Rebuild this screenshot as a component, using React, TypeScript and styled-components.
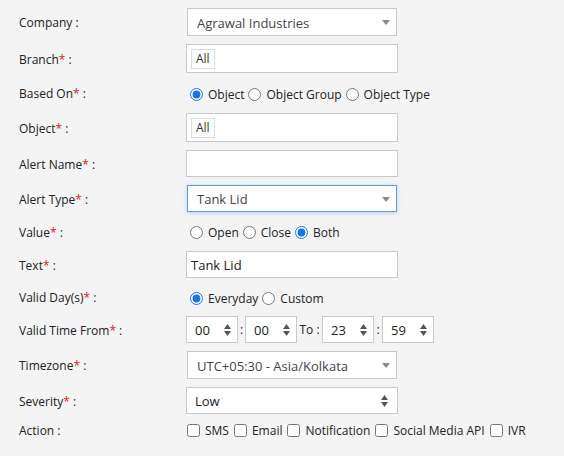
import React from 'react';
import styled, { createGlobalStyle, css } from 'styled-components';

const GlobalStyle = createGlobalStyle`
  html, body {
    margin: 0;
    padding: 0;
    background: #f4f4f4;
  }
  body {
    font-family: "Open Sans", "Noto Sans", "Liberation Sans", sans-serif;
    font-size: 12px;
    color: #222;
  }
`;

const Form = styled.div`
  display: flex;
  flex-direction: column;
  gap: 8px;
  padding: 8px 0 0 19px;
  width: 545px;
`;

const Row = styled.div<{ $h: number }>`
  display: flex;
  align-items: center;
  height: ${(p) => p.$h}px;
`;

const Label = styled.div`
  width: 167px;
  flex-shrink: 0;
  color: #222;
  line-height: 16px;
  padding-top: 2px;
`;

const Req = styled.span`
  color: #e8141c;
`;

const boxBase = css`
  box-sizing: border-box;
  background: #fff;
  border: 1px solid #c9c9c9;
  display: flex;
  align-items: center;
`;

const SelectBox = styled.div<{ $focus?: boolean }>`
  ${boxBase}
  width: 210px;
  height: 28px;
  margin-left: 1px;
  padding: 1px 6px 0 9px;
  justify-content: space-between;
  font-size: 13px;
  color: #444;
  ${(p) =>
    p.$focus &&
    css`
      height: 27px;
      border-color: #5b9cf2;
      box-shadow: 0 1px 4px rgba(80, 130, 200, 0.35);
    `}
`;

const NativeSelect = styled.div`
  ${boxBase}
  width: 212px;
  height: 27px;
  padding: 0 9px 0 8px;
  justify-content: space-between;
  font-size: 13px;
  color: #222;
`;

const TextBox = styled.div`
  ${boxBase}
  width: 212px;
  height: 27px;
  padding: 0 4px;
  font-size: 13px;
  color: #222;
`;

const TagBox = styled.div`
  ${boxBase}
  width: 212px;
  height: 29px;
  padding: 0 4px;
`;

const Tag = styled.span`
  box-sizing: border-box;
  height: 20px;
  padding: 0 4px;
  border: 1px solid #dcdcdc;
  display: inline-flex;
  align-items: center;
  font-size: 12px;
  color: #333;
`;

const OptionGroup = styled.div`
  display: flex;
  align-items: center;
  padding: 2px 0 0 4px;
  gap: 4px;
`;

const Option = styled.label`
  display: inline-flex;
  align-items: center;
  gap: 5px;
  color: #222;
  white-space: nowrap;

  input {
    margin: 0;
    width: 13px;
    height: 13px;
    accent-color: #1a73e8;
  }
`;

const CheckGroup = styled(OptionGroup)`
  padding: 0 0 0 1px;
  gap: 5px;
`;

const TimeRow = styled.div`
  display: flex;
  align-items: center;
`;

const Spin = styled.div`
  ${boxBase}
  width: 52px;
  height: 27px;
  padding: 0 6px 0 8px;
  justify-content: space-between;
  font-size: 13px;
  color: #222;
`;

const Sep = styled.span<{ $w: number }>`
  width: ${(p) => p.$w}px;
  text-align: center;
  color: #222;
`;

const DownArrow = () => (
  <svg width="8" height="5" viewBox="0 0 8 5">
    <path d="M0 0h8L4 5z" fill="#8a8a8a" />
  </svg>
);

const UpDown = () => (
  <svg width="7" height="12" viewBox="0 0 7 12">
    <path d="M0 5h7L3.5 0z" fill="#555" />
    <path d="M0 7h7L3.5 12z" fill="#555" />
  </svg>
);

const Radio = ({ label, checked, name }: { label: string; checked?: boolean; name: string }) => (
  <Option>
    <input type="radio" name={name} defaultChecked={checked} />
    {label}
  </Option>
);

const Check = ({ label }: { label: string }) => (
  <Option>
    <input type="checkbox" />
    {label}
  </Option>
);

const Field = ({ text, req }: { text: string; req?: boolean }) => (
  <Label>
    {text}
    {req && <Req>*</Req>} :
  </Label>
);

export default function App() {
  return (
    <>
      <GlobalStyle />
      <Form>
        <Row $h={28}>
          <Field text="Company" />
          <SelectBox>
            Agrawal Industries
            <DownArrow />
          </SelectBox>
        </Row>
        <Row $h={29}>
          <Field text="Branch" req />
          <TagBox>
            <Tag>All</Tag>
          </TagBox>
        </Row>
        <Row $h={24}>
          <Field text="Based On" req />
          <OptionGroup>
            <Radio name="based" label="Object" checked />
            <Radio name="based" label="Object Group" />
            <Radio name="based" label="Object Type" />
          </OptionGroup>
        </Row>
        <Row $h={29}>
          <Field text="Object" req />
          <TagBox>
            <Tag>All</Tag>
          </TagBox>
        </Row>
        <Row $h={27}>
          <Field text="Alert Name" req />
          <TextBox />
        </Row>
        <Row $h={27}>
          <Field text="Alert Type" req />
          <SelectBox $focus>
            Tank Lid
            <DownArrow />
          </SelectBox>
        </Row>
        <Row $h={23}>
          <Field text="Value" req />
          <OptionGroup>
            <Radio name="value" label="Open" />
            <Radio name="value" label="Close" />
            <Radio name="value" label="Both" checked />
          </OptionGroup>
        </Row>
        <Row $h={27}>
          <Field text="Text" req />
          <TextBox>Tank Lid</TextBox>
        </Row>
        <Row $h={22}>
          <Field text="Valid Day(s)" req />
          <OptionGroup>
            <Radio name="days" label="Everyday" checked />
            <Radio name="days" label="Custom" />
          </OptionGroup>
        </Row>
        <Row $h={27}>
          <Field text="Valid Time From" req />
          <TimeRow>
            <Spin>
              00
              <UpDown />
            </Spin>
            <Sep $w={7}>:</Sep>
            <Spin>
              00
              <UpDown />
            </Spin>
            <Sep $w={25}>To :</Sep>
            <Spin>
              23
              <UpDown />
            </Spin>
            <Sep $w={8}>:</Sep>
            <Spin>
              59
              <UpDown />
            </Spin>
          </TimeRow>
        </Row>
        <Row $h={28}>
          <Field text="Timezone" req />
          <SelectBox>
            UTC+05:30 - Asia/Kolkata
            <DownArrow />
          </SelectBox>
        </Row>
        <Row $h={27}>
          <Field text="Severity" req />
          <NativeSelect>
            Low
            <UpDown />
          </NativeSelect>
        </Row>
        <Row $h={16}>
          <Field text="Action" />
          <CheckGroup>
            <Check label="SMS" />
            <Check label="Email" />
            <Check label="Notification" />
            <Check label="Social Media API" />
            <Check label="IVR" />
          </CheckGroup>
        </Row>
      </Form>
    </>
  );
}
